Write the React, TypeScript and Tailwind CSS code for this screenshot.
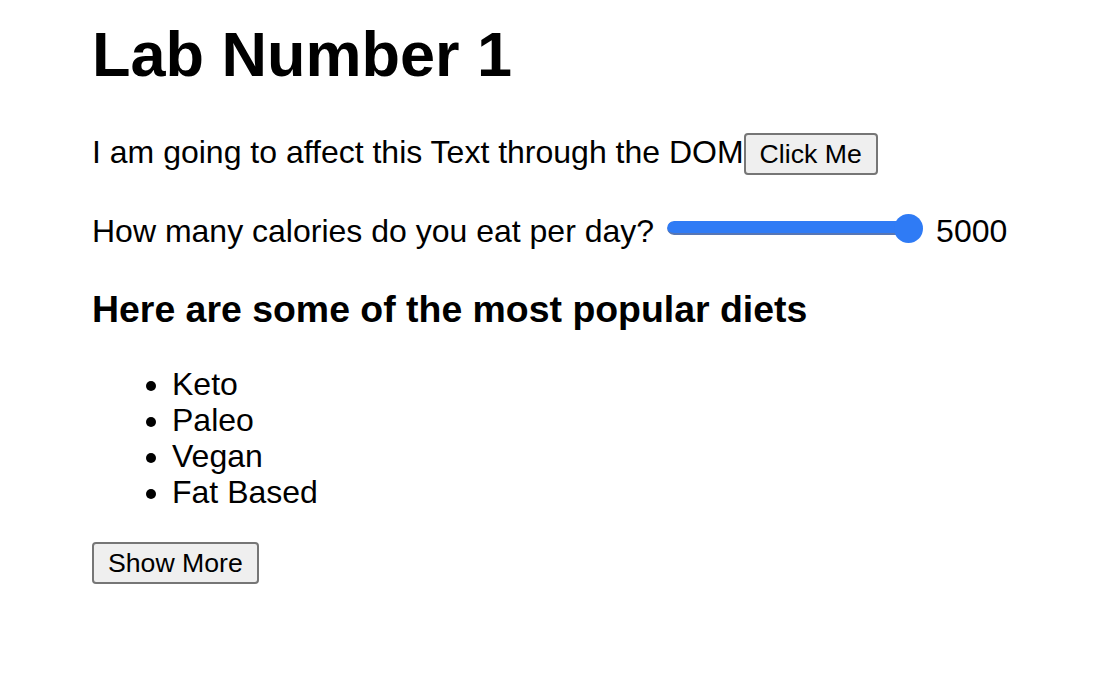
import { useState } from "react";

const diets = ["Keto", "Paleo", "Vegan", "Fat Based"];

const btn =
  "bg-[#efefef] border-2 border-[#767676] rounded-[4px] px-[14px] py-[2px] text-[26.67px] leading-[32px] text-black";

function Slider({ value }: { value: number }) {
  const pct = (value / 5000) * 100;
  return (
    <div className="flex items-center w-[256px] h-[32px] mt-[7px] mx-[13px] self-start">
      <div className="flex-1 flex h-[14px] rounded-full bg-[#dcdcdc] overflow-hidden">
        <div
          className="h-[14px] rounded-full bg-[#2f7bf5] border-b-2 border-[#5776b4]"
          style={{ width: `${pct}%` }}
        />
      </div>
      <div className="w-[29px] h-[29px] -ml-[27px] rounded-full bg-[#2f7bf5] shrink-0" />
    </div>
  );
}

export default function App() {
  const [text, setText] = useState("I am going to affect this Text through the DOM");
  const [cal] = useState(5000);

  return (
    <div className="min-h-screen bg-white pl-[92px] pt-[18px] flex flex-col items-start text-black text-[32px] font-['Liberation_Sans',Arial,sans-serif]">
      <h1 className="text-[63px] font-bold leading-[72px]">Lab Number 1</h1>

      <p className="mt-[43px] flex items-baseline leading-[36.8px]">
        <span>{text}</span>
        <button className={`${btn} py-[3px]`} onClick={() => setText("You clicked the button!")}>
          Click Me
        </button>
      </p>

      <p className="mt-[30px] flex items-end leading-[36.8px] h-[45px]">
        <span>How many calories do you eat per day?</span>
        <Slider value={cal} />
        <span>{cal}</span>
      </p>

      <h3 className="mt-[38px] text-[37.44px] font-bold leading-[43px]">
        Here are some of the most popular diets
      </h3>

      <ul className="mt-[35px] list-disc pl-[80px] flex flex-col">
        {diets.map((d) => (
          <li key={d} className="leading-[36px]">
            {d}
          </li>
        ))}
      </ul>

      <button className={`${btn} py-[3px] mt-[32px]`}>Show More</button>
    </div>
  );
}
